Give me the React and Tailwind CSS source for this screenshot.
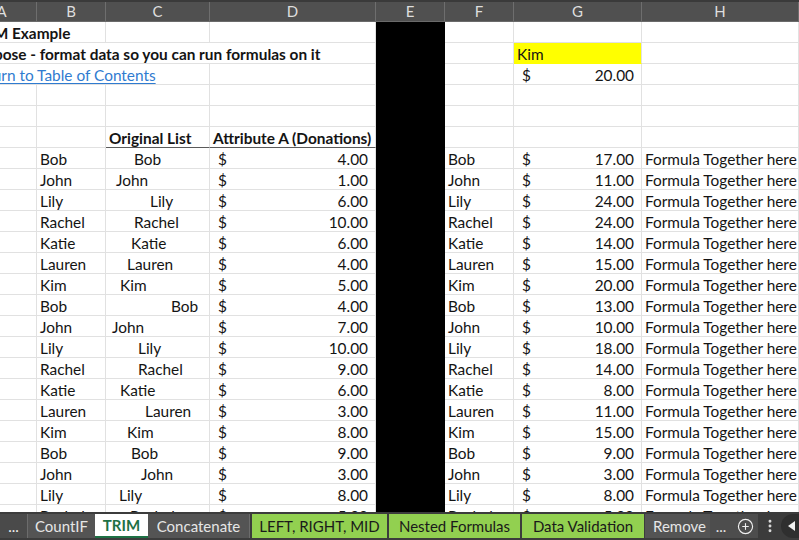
import { CirclePlus, EllipsisVertical } from 'lucide-react'

const CELL = 'shrink-0 h-[21px] border-r border-b border-[#e1e1e1] px-[3px] pt-[3px] flex items-center whitespace-nowrap overflow-hidden'

// rows 7+ : B name, C name, C indent, D amount, F name, G amount
const rows = [
  ['Bob', 'Bob', 'pl-[28px]', '4.00', 'Bob', '17.00'],
  ['John', 'John', 'pl-[10px]', '1.00', 'John', '11.00'],
  ['Lily', 'Lily', 'pl-[44px]', '6.00', 'Lily', '24.00'],
  ['Rachel', 'Rachel', 'pl-[28px]', '10.00', 'Rachel', '24.00'],
  ['Katie', 'Katie', 'pl-[25px]', '6.00', 'Katie', '14.00'],
  ['Lauren', 'Lauren', 'pl-[21px]', '4.00', 'Lauren', '15.00'],
  ['Kim', 'Kim', 'pl-[14px]', '5.00', 'Kim', '20.00'],
  ['Bob', 'Bob', 'pl-[65px]', '4.00', 'Bob', '13.00'],
  ['John', 'John', 'pl-[6px]', '7.00', 'John', '10.00'],
  ['Lily', 'Lily', 'pl-[32px]', '10.00', 'Lily', '18.00'],
  ['Rachel', 'Rachel', 'pl-[32px]', '9.00', 'Rachel', '14.00'],
  ['Katie', 'Katie', 'pl-[14px]', '6.00', 'Katie', '8.00'],
  ['Lauren', 'Lauren', 'pl-[39px]', '3.00', 'Lauren', '11.00'],
  ['Kim', 'Kim', 'pl-[21px]', '8.00', 'Kim', '15.00'],
  ['Bob', 'Bob', 'pl-[25px]', '9.00', 'Bob', '9.00'],
  ['John', 'John', 'pl-[35px]', '3.00', 'John', '3.00'],
  ['Lily', 'Lily', 'pl-[13px]', '8.00', 'Lily', '8.00'],
  ['Rachel', 'Rachel', 'pl-[24px]', '5.00', 'Rachel', '5.00'],
]

function Money({ value, w }) {
  return (
    <div className={`${CELL} ${w} justify-between pl-[8px] pr-[7px]`}>
      <span>$</span>
      <span>{value}</span>
    </div>
  )
}

function Black() {
  return <div className="shrink-0 w-[69px] h-[21px] bg-black" />
}

function Empty({ w, className = '' }) {
  return <div className={`${CELL} ${w} ${className}`} />
}

function Tab({ children, className }) {
  return (
    <div className={`h-[24px] shrink-0 flex items-center justify-center whitespace-nowrap overflow-hidden ${className}`}>
      {children}
    </div>
  )
}

export default function App() {
  return (
    <div className="w-[799px] h-[540px] overflow-hidden bg-white flex flex-col font-['Lato','Open_Sans',sans-serif] text-[15.4px] text-[#141414]">
      {/* column headers */}
      <div className="h-[22px] shrink-0 bg-[#505050] border-t-2 border-[#3a3a3a] border-b border-b-[#6a6a6a] overflow-hidden">
        <div className="flex ml-[-33px] h-full text-[#dedede] text-[15px]">
          {[
            ['A', 'w-[70px]'],
            ['B', 'w-[69px]'],
            ['C', 'w-[104px]'],
            ['D', 'w-[166px]'],
            ['E', 'w-[69px]'],
            ['F', 'w-[69px]'],
            ['G', 'w-[128px]'],
            ['H', 'w-[157px]'],
          ].map(([l, w]) => (
            <div key={l} className={`${w} shrink-0 h-full border-r border-[#6e6e6e] flex items-center justify-center`}>
              {l}
            </div>
          ))}
        </div>
      </div>

      {/* sheet body */}
      <div className="flex-1 overflow-hidden">
        <div className="ml-[-33px] flex flex-col">
          <div className="flex">
            <div className={`${CELL} w-[139px] font-bold`}>TRIM Example</div>
            <Empty w="w-[104px]" />
            <Empty w="w-[166px]" />
            <Black />
            <Empty w="w-[69px]" />
            <Empty w="w-[128px]" />
            <Empty w="w-[157px]" />
          </div>
          <div className="flex">
            <div className={`${CELL} w-[409px] font-bold`}>Purpose - format data so you can run formulas on it</div>
            <Black />
            <Empty w="w-[69px]" />
            <div className={`${CELL} w-[128px] bg-[#ffff00] border-b-[#ffff00]`}>Kim</div>
            <Empty w="w-[157px]" />
          </div>
          <div className="flex">
            <div className={`${CELL} w-[243px]`}>
              <span className="text-[#2f7bd0] underline underline-offset-2">Return to Table of Contents</span>
            </div>
            <Empty w="w-[166px]" />
            <Black />
            <Empty w="w-[69px]" />
            <Money value="20.00" w="w-[128px]" />
            <Empty w="w-[157px]" />
          </div>
          {[0, 1].map((i) => (
            <div key={i} className="flex">
              <Empty w="w-[70px]" />
              <Empty w="w-[69px]" />
              <Empty w="w-[104px]" />
              <Empty w="w-[166px]" />
              <Black />
              <Empty w="w-[69px]" />
              <Empty w="w-[128px]" />
              <Empty w="w-[157px]" />
            </div>
          ))}
          <div className="flex">
            <Empty w="w-[70px]" />
            <Empty w="w-[69px]" />
            <div className={`${CELL} w-[104px] font-bold border-b-[#5a5a5a]`}>Original List</div>
            <div className={`${CELL} w-[166px] font-bold border-b-[#5a5a5a]`}>Attribute A (Donations)</div>
            <Black />
            <Empty w="w-[69px]" />
            <Empty w="w-[128px]" />
            <Empty w="w-[157px]" />
          </div>
          {rows.map(([b, c, pad, d, f, g], i) => (
            <div key={i} className="flex">
              <Empty w="w-[70px]" />
              <div className={`${CELL} w-[69px]`}>{b}</div>
              <div className={`${CELL} w-[104px] ${pad}`}>{c}</div>
              <Money value={d} w="w-[166px]" />
              <Black />
              <div className={`${CELL} w-[69px]`}>{f}</div>
              <Money value={g} w="w-[128px]" />
              <div className={`${CELL} w-[157px]`}>Formula Together here</div>
            </div>
          ))}
        </div>
      </div>

      {/* sheet tabs */}
      <div className="h-[28px] shrink-0 bg-[#3c3c3c] pt-[2px] flex items-start text-[15px] overflow-hidden">
        <Tab className="w-[27px] bg-[#4a4a4a] text-[#f0f0f0]">...</Tab>
        <Tab className="w-[68px] bg-[#545454] text-[#e6e6e6] border-l border-[#6c6c6c]">CountIF</Tab>
        <Tab className="w-[53px] bg-white text-[#1e7145] font-bold border-b-2 border-[#1e7145]">TRIM</Tab>
        <Tab className="w-[102px] bg-[#545454] text-[#e6e6e6] border-r border-[#6c6c6c]">Concatenate</Tab>
        <Tab className="w-[135px] ml-[2px] bg-[#92d050] text-[#1a1a1a]">LEFT, RIGHT, MID</Tab>
        <Tab className="w-[131px] ml-[2px] bg-[#92d050] text-[#1a1a1a]">Nested Formulas</Tab>
        <Tab className="w-[122px] ml-[2px] bg-[#92d050] text-[#1a1a1a]">Data Validation</Tab>
        <div className="ml-[1px] w-[113px] h-[24px] shrink-0 bg-[#4d4d4d] flex items-center text-[#e6e6e6]">
          <span className="w-[65px] h-full bg-[#545454] pl-[8px] flex items-center overflow-hidden whitespace-nowrap">Remove</span>
          <span className="w-[22px] text-center">...</span>
          <span className="w-[26px] flex justify-center text-[#f0f0f0]">
            <CirclePlus size={17} strokeWidth={1.6} />
          </span>
        </div>
        <Tab className="w-[23px] text-[#dcdcdc]">
          <EllipsisVertical size={16} strokeWidth={2.4} />
        </Tab>
        <Tab className="w-[18px] bg-[#2f2f2f] rounded-l-full justify-start pl-[5px]">
          <svg width="10" height="12" viewBox="0 0 10 12">
            <path d="M9 1 L2 6 L9 11 Z" fill="#f2f2f2" />
          </svg>
        </Tab>
      </div>
    </div>
  )
}
